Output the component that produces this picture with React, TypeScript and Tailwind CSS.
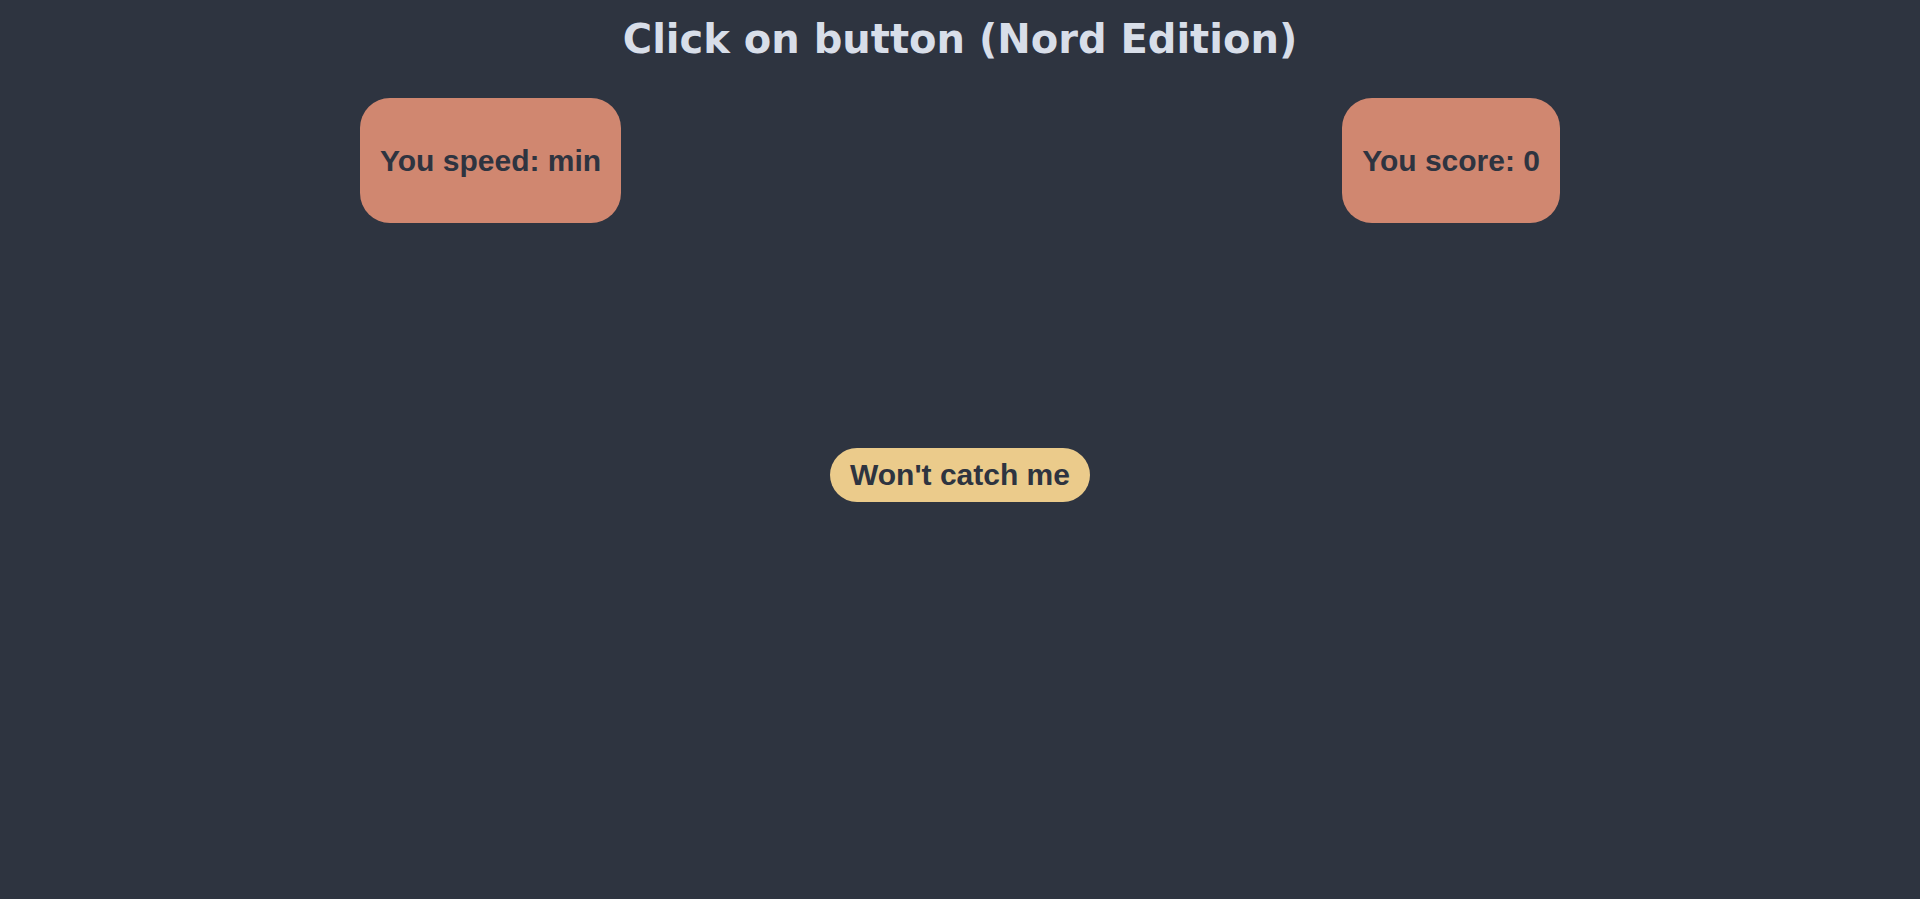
import React from "react";

export default function App() {
  return (
    <div className="min-h-[899px] w-full bg-[#2e3440] flex flex-col items-center">
      <h1
        className="mt-[16px] text-[40px] leading-[47px] font-bold text-[#d8dee9]"
        style={{ fontFamily: '"DejaVu Sans", Verdana, sans-serif' }}
      >
        Click on button (Nord Edition)
      </h1>
      <div
        className="mt-[35px] w-[1200px] flex justify-between items-start"
        style={{ fontFamily: '"Liberation Sans", Arial, sans-serif' }}
      >
        <div className="bg-[#d08770] text-[#2e3440] text-[30px] leading-[35px] font-bold px-[20px] py-[45px] rounded-[30px] whitespace-nowrap">
          You speed: min
        </div>
        <div className="bg-[#d08770] text-[#2e3440] text-[30px] leading-[35px] font-bold px-[20px] py-[45px] rounded-[30px] whitespace-nowrap">
          You score: 0
        </div>
      </div>
      <button
        className="mt-[225px] bg-[#ebcb8b] text-[#2e3440] text-[30px] leading-[34px] font-bold px-[20px] py-[10px] rounded-full whitespace-nowrap"
        style={{ fontFamily: '"Liberation Sans", Arial, sans-serif' }}
      >
        Won't catch me
      </button>
    </div>
  );
}
